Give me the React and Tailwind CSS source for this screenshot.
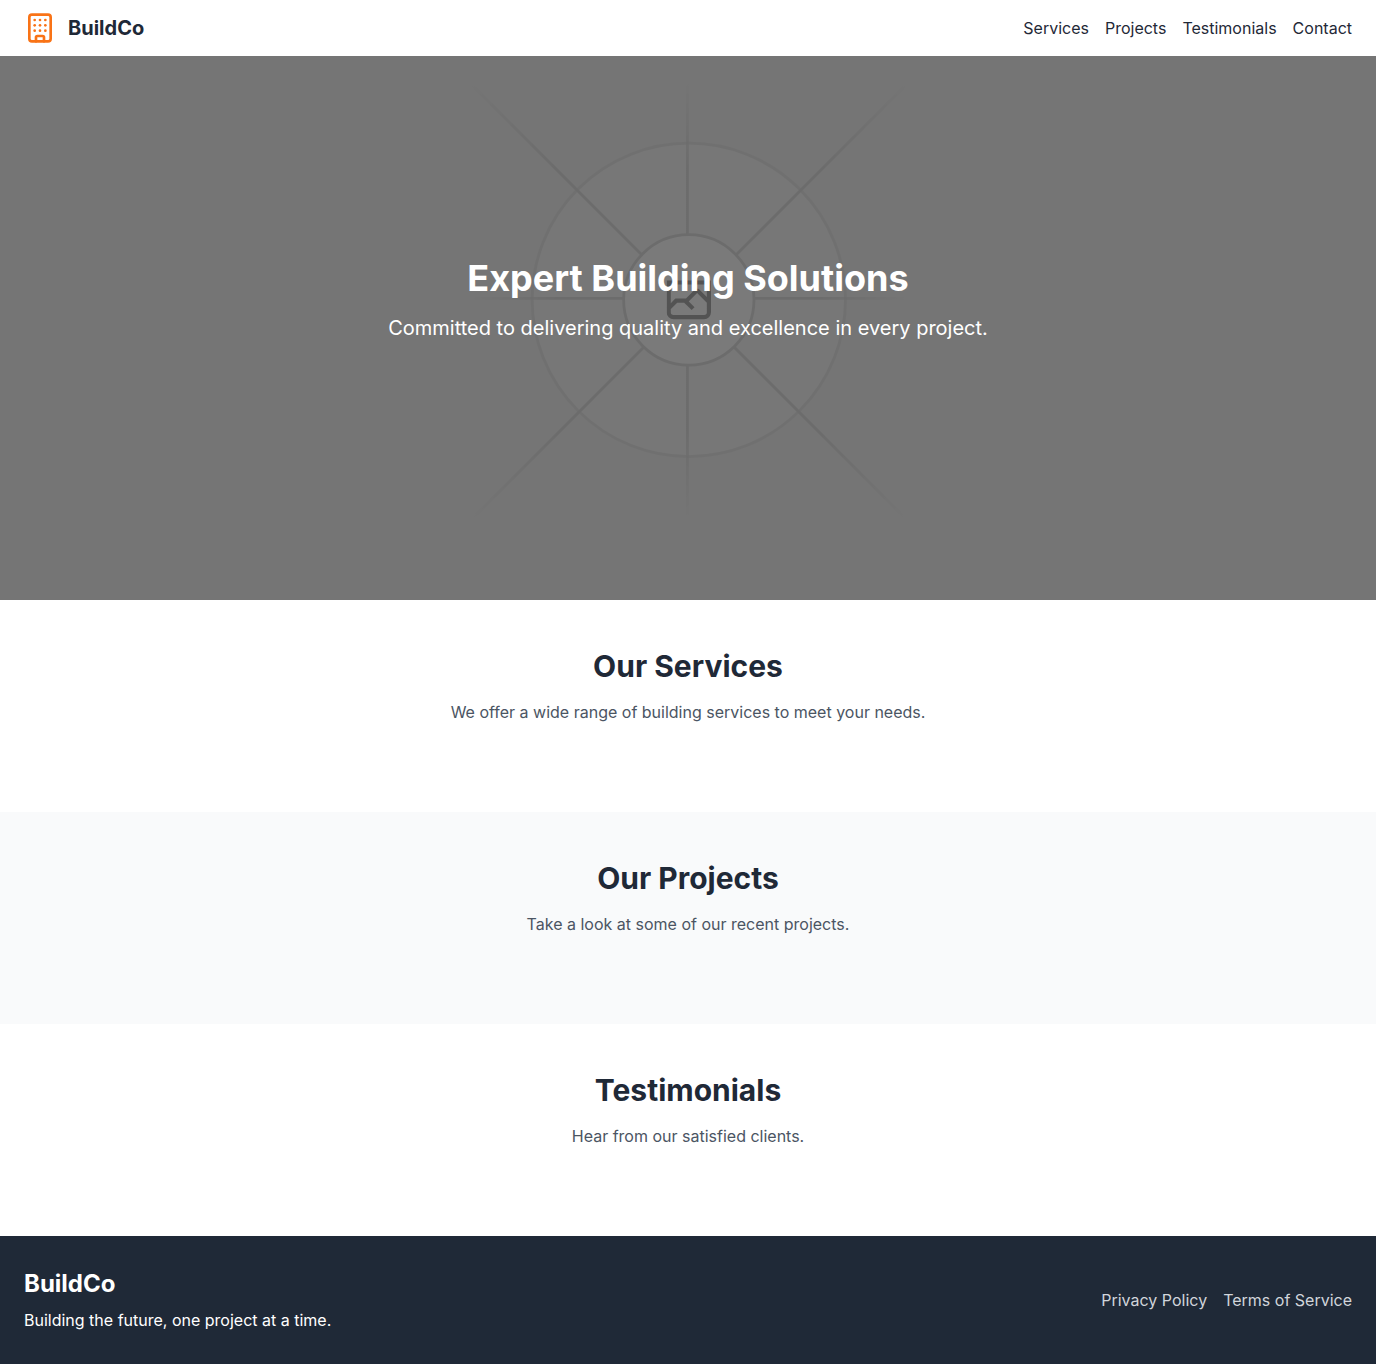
import { Building } from "lucide-react";

const NAV_LINKS = [
  { label: "Services", href: "#services" },
  { label: "Projects", href: "#projects" },
  { label: "Testimonials", href: "#testimonials" },
  { label: "Contact", href: "#contact" },
];

const SECTIONS = [
  {
    id: "services",
    title: "Our Services",
    text: "We offer a wide range of building services to meet your needs.",
    tone: "bg-white",
  },
  {
    id: "projects",
    title: "Our Projects",
    text: "Take a look at some of our recent projects.",
    tone: "bg-[#f9fafb]",
  },
  {
    id: "testimonials",
    title: "Testimonials",
    text: "Hear from our satisfied clients.",
    tone: "bg-white",
  },
];

const RAY_GRADIENTS = [
  { id: "ray-rising", x1: 554.061, y1: 0.083, x2: -0.48, y2: 0.087 },
  { id: "ray-horizontal", x1: 796.912, y1: 599.963, x2: 404.507, y2: 599.965 },
  { id: "ray-vertical", x1: 600.792, y1: 403.677, x2: 600.794, y2: 796.082 },
  { id: "ray-falling", x1: 404.85, y1: 403.903, x2: 796.972, y2: 796.02 },
];

function HeroBackdrop() {
  return (
    <svg
      className="absolute inset-0 h-full w-full"
      viewBox="0 0 1200 1200"
      preserveAspectRatio="xMidYMid slice"
      fill="none"
      aria-hidden="true"
    >
      <defs>
        {RAY_GRADIENTS.map((g) => (
          <linearGradient key={g.id} id={g.id} x1={g.x1} y1={g.y1} x2={g.x2} y2={g.y2} gradientUnits="userSpaceOnUse">
            <stop offset=".02" stopColor="#C9C9C9" stopOpacity="0" />
            <stop offset=".208" stopColor="#C9C9C9" />
            <stop offset=".792" stopColor="#C9C9C9" />
            <stop offset=".98" stopColor="#C9C9C9" stopOpacity="0" />
          </linearGradient>
        ))}
        <clipPath id="picture-clip">
          <path d="M581.364 580.535h38.689v38.689h-38.689z" />
        </clipPath>
      </defs>
      <rect width="1200" height="1200" fill="#EAEAEA" />
      <g opacity=".5">
        <g opacity=".5">
          <circle cx="600.709" cy="599.88" r="136.621" fill="#FAFAFA" stroke="#C9C9C9" strokeWidth="2.418" />
        </g>
        <g strokeWidth="2.418">
          <path stroke="url(#ray-rising)" d="M0-1.209h553.581" transform="scale(1 -1) rotate(45 1163.11 91.165)" />
          <path stroke="url(#ray-horizontal)" d="M404.846 598.671h391.726" />
          <path stroke="url(#ray-vertical)" d="M599.5 795.742V404.017" />
          <path stroke="url(#ray-falling)" d="m795.717 796.597-391.441-391.44" />
        </g>
        <circle cx="600.709" cy="599.88" r="56.825" fill="#fff" stroke="#C9C9C9" strokeWidth="2.418" />
        <g clipPath="url(#picture-clip)">
          <path
            fill="#666"
            fillRule="evenodd"
            clipRule="evenodd"
            d="M616.426 586.58h-31.434v16.176l3.553-3.554.531-.531h9.068l.074-.074 8.463-8.463h2.565l7.18 7.181V586.58Zm-15.715 14.654 3.698 3.699 1.283 1.282-2.565 2.565-1.282-1.283-5.2-5.199h-6.066l-5.514 5.514-.073.073v2.876a2.418 2.418 0 0 0 2.418 2.418h26.598a2.418 2.418 0 0 0 2.418-2.418v-8.317l-8.463-8.463-7.181 7.181-.071.072Zm-19.347 5.442v4.085a6.045 6.045 0 0 0 6.046 6.045h26.598a6.044 6.044 0 0 0 6.045-6.045v-7.108l1.356-1.355-1.282-1.283-.074-.073v-17.989h-38.689v23.43l-.146.146.146.147Z"
          />
        </g>
      </g>
    </svg>
  );
}

export default function App() {
  return (
    <div className="font-['Inter',sans-serif] text-[#1f2937] bg-white">
      <header className="fixed inset-x-0 top-0 z-10 flex items-center justify-between bg-white px-6 py-3">
        <a href="#top" className="flex items-center gap-3">
          <Building className="h-8 w-8 text-[#f97316]" aria-hidden="true" />
          <span className="text-xl font-bold">BuildCo</span>
        </a>
        <nav className="flex gap-4">
          {NAV_LINKS.map((link) => (
            <a key={link.href} href={link.href}>
              {link.label}
            </a>
          ))}
        </nav>
      </header>

      <main>
        <section
          id="top"
          className="relative flex h-[600px] flex-col items-center justify-center overflow-hidden text-center text-white"
        >
          <HeroBackdrop />
          <div className="absolute inset-0 bg-black/50" />
          <div className="relative px-6">
            <h1 className="text-4xl font-bold">Expert Building Solutions</h1>
            <p className="mt-4 text-xl">Committed to delivering quality and excellence in every project.</p>
          </div>
        </section>

        {SECTIONS.map((section) => (
          <section key={section.id} id={section.id} className={`px-6 pt-12 pb-22 text-center ${section.tone}`}>
            <h2 className="text-3xl font-bold">{section.title}</h2>
            <p className="mt-4 text-[#4b5563]">{section.text}</p>
          </section>
        ))}
      </main>

      <footer id="contact" className="flex items-center justify-between bg-[#1f2937] px-6 py-8 text-white">
        <div>
          <h3 className="text-2xl font-bold">BuildCo</h3>
          <p className="mt-2">Building the future, one project at a time.</p>
        </div>
        <div className="flex gap-4 text-[#d1d5db]">
          <a href="#privacy">Privacy Policy</a>
          <a href="#terms">Terms of Service</a>
        </div>
      </footer>
    </div>
  );
}
